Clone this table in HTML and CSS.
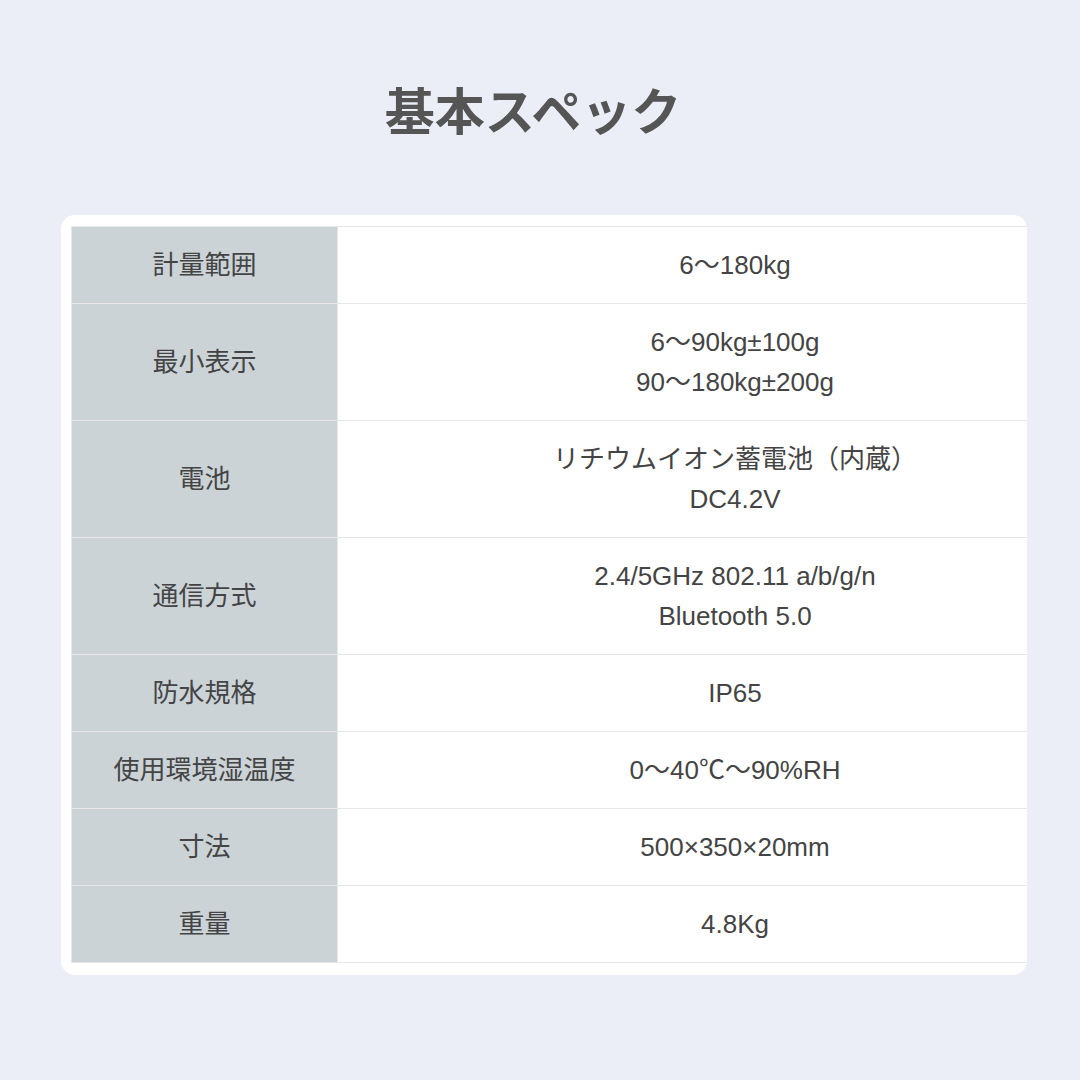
FILE: index.html
```html
<!DOCTYPE html>
<html lang="ja">
<head>
<meta charset="utf-8">
<title>基本スペック</title>
<link rel="stylesheet" href="styles.css">
</head>
<body>
<main class="page">
  <h1 class="title">基本スペック</h1>
  <section class="card">
    <table class="spec">
      <tbody>
        <tr><th>計量範囲</th><td>6〜180kg</td></tr>
        <tr><th>最小表示</th><td>6〜90kg±100g<br>90〜180kg±200g</td></tr>
        <tr><th>電池</th><td>リチウムイオン蓄電池（内蔵）<br>DC4.2V</td></tr>
        <tr><th>通信方式</th><td>2.4/5GHz 802.11 a/b/g/n<br>Bluetooth 5.0</td></tr>
        <tr><th>防水規格</th><td>IP65</td></tr>
        <tr><th>使用環境湿温度</th><td>0〜40℃〜90%RH</td></tr>
        <tr><th>寸法</th><td>500×350×20mm</td></tr>
        <tr><th>重量</th><td>4.8Kg</td></tr>
      </tbody>
    </table>
  </section>
</main>
</body>
</html>
```
FILE: styles.css
```css
html, body {
  margin: 0;
  padding: 0;
  background: #eceef7;
}
.page {
  width: 1080px;
  height: 1080px;
  font-family: "Liberation Sans", "Noto Sans CJK JP", sans-serif;
  color: #444444;
  overflow: hidden;
}
.title {
  margin: 0;
  padding: 80px 14px 0 0;
  height: 215px;
  box-sizing: border-box;
  text-align: center;
  font-family: "Noto Sans CJK JP", sans-serif;
  font-weight: 700;
  font-size: 50px;
  line-height: 56px;
  color: #555555;
}
.card {
  margin-left: 61px;
  width: 966px;
  box-sizing: border-box;
  background: #ffffff;
  border-radius: 14px;
  padding: 11px 0 12px 10px;
  overflow: hidden;
}
.spec {
  width: 1062px;
  border-collapse: collapse;
  table-layout: fixed;
}
.spec th, .spec td {
  border: 1px solid #e6e6e6;
  padding: 18px 0;
  font-size: 26px;
  line-height: 40px;
  text-align: center;
  font-weight: 400;
}
.spec th {
  width: 265px;
  background: #cbd3d7;
  color: #444444;
}
.spec td {
  background: #ffffff;
}
```
